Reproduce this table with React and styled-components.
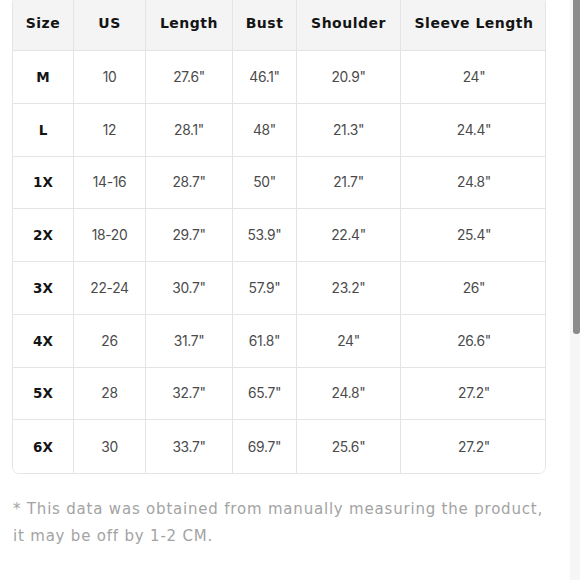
import React from "react";
import styled, { createGlobalStyle } from "styled-components";

const GlobalStyle = createGlobalStyle`
  html, body {
    margin: 0;
    padding: 0;
    background: #fff;
    font-family: "Inter", "Noto Sans", sans-serif;
    overflow: hidden;
  }
`;

const rows = [
  ["M", "10", "27.6\"", "46.1\"", "20.9\"", "24\""],
  ["L", "12", "28.1\"", "48\"", "21.3\"", "24.4\""],
  ["1X", "14-16", "28.7\"", "50\"", "21.7\"", "24.8\""],
  ["2X", "18-20", "29.7\"", "53.9\"", "22.4\"", "25.4\""],
  ["3X", "22-24", "30.7\"", "57.9\"", "23.2\"", "26\""],
  ["4X", "26", "31.7\"", "61.8\"", "24\"", "26.6\""],
  ["5X", "28", "32.7\"", "65.7\"", "24.8\"", "27.2\""],
  ["6X", "30", "33.7\"", "69.7\"", "25.6\"", "27.2\""]
];

const heads = ["Size", "US", "Length", "Bust", "Shoulder", "Sleeve Length"];

const Page = styled.div`
  width: 580px;
  height: 580px;
  padding: 0 34px 0 12px;
  box-sizing: border-box;
`;

const Table = styled.div`
  display: grid;
  grid-template-columns: 61px 72px 87px 64px 104px 146px;
  grid-auto-rows: 52.75px;
  grid-template-rows: 54px;
  width: 534px;
  margin-top: -4px;
  border: 1px solid #e4e4e4;
  border-radius: 7px;
  overflow: hidden;
  box-sizing: border-box;
`;

const Cell = styled.div`
  display: flex;
  align-items: center;
  justify-content: center;
  box-sizing: border-box;
  border-right: ${(p) => (p.last ? "none" : "1px solid #e4e4e4")};
  border-bottom: ${(p) => (p.bottom ? "none" : "1px solid #e4e4e4")};
  background: ${(p) => (p.head ? "#f4f4f4" : "#fff")};
  color: ${(p) => (p.head || p.strong ? "#141414" : "#4a4a4a")};
  font-family: ${(p) =>
    p.head || p.strong ? '"DejaVu Sans", sans-serif' : '"Inter", sans-serif'};
  font-weight: ${(p) => (p.head || p.strong ? 700 : 400)};
  font-size: ${(p) => (p.head ? "14px" : p.strong ? "13.5px" : "13.8px")};
  letter-spacing: ${(p) => (p.head ? "0.5px" : p.strong ? "0" : "-0.3px")};
  padding-bottom: ${(p) => (p.head ? "2px" : "0")};
`;

const Note = styled.p`
  margin: 22px 0 0 1px;
  width: 534px;
  font-family: "DejaVu Sans", sans-serif;
  font-size: 15px;
  line-height: 27px;
  color: #a3a3a3;
  letter-spacing: 0.8px;
`;

const Track = styled.div`
  position: fixed;
  top: 0;
  right: 0;
  width: 10px;
  height: 580px;
  background: #f6f6f6;
`;

const Thumb = styled.div`
  position: absolute;
  top: 0;
  right: 0;
  width: 7px;
  height: 334px;
  background: #8b8b8b;
  border-radius: 0 0 3px 3px;
`;

export default function App() {
  return (
    <Page>
      <GlobalStyle />
      <Table>
        {heads.map((h, i) => (
          <Cell key={h} head last={i === heads.length - 1}>
            {h}
          </Cell>
        ))}
        {rows.map((r, ri) =>
          r.map((v, ci) => (
            <Cell
              key={ri + "-" + ci}
              strong={ci === 0}
              last={ci === r.length - 1}
              bottom={ri === rows.length - 1}
            >
              {v}
            </Cell>
          ))
        )}
      </Table>
      <Note>
        * This data was obtained from manually measuring the product, it may be off by 1-2 CM.
      </Note>
      <Track>
        <Thumb />
      </Track>
    </Page>
  );
}
